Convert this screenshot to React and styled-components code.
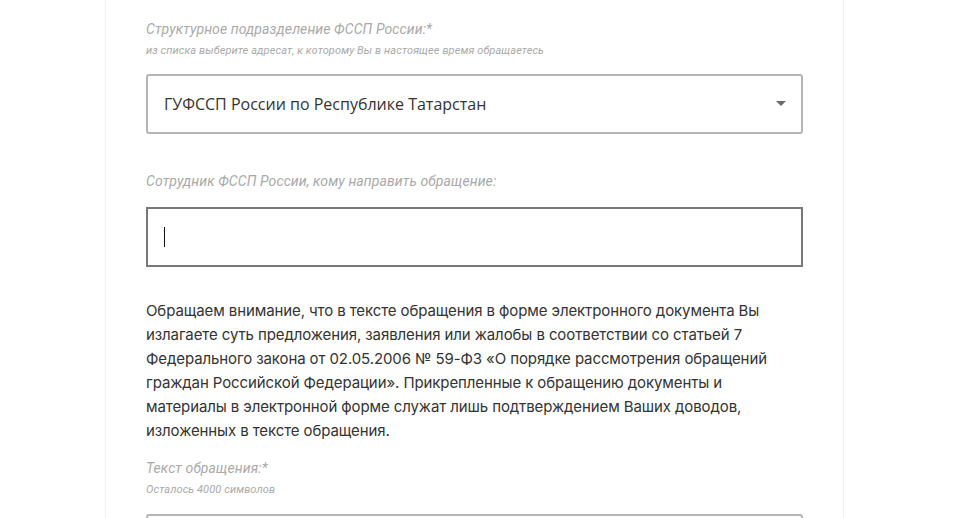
import React from "react";
import styled, { createGlobalStyle } from "styled-components";

const GlobalStyle = createGlobalStyle`
  html, body {
    margin: 0;
    padding: 0;
    background: #ffffff;
    overflow: hidden;
  }
`;

const Page = styled.div`
  width: 970px;
  height: 518px;
  overflow: hidden;
  background: #ffffff;
`;

const Card = styled.section`
  margin-left: 105px;
  width: 739px;
  min-height: 518px;
  border-left: 1px solid #f0f0f0;
  border-right: 1px solid #f0f0f0;
  padding: 21px 40px 0 40px;
  box-sizing: border-box;
`;

const Field = styled.div`
  display: flex;
  flex-direction: column;
  margin-bottom: ${(p) => p.gap || 0}px;
`;

const Label = styled.label`
  font-family: Roboto, "Liberation Sans", sans-serif;
  font-style: italic;
  font-size: 14px;
  letter-spacing: 0.1px;
  line-height: 16px;
  color: #a9a9a9;
`;

const Hint = styled.span`
  font-family: Roboto, "Liberation Sans", sans-serif;
  font-style: italic;
  font-size: 11px;
  letter-spacing: 0.1px;
  line-height: 12px;
  margin-top: 8px;
  color: #a9a9a9;
`;

const SelectBox = styled.div`
  margin-top: ${(p) => p.top}px;
  height: 60px;
  box-sizing: border-box;
  border: 2px solid #b5b5b5;
  border-radius: 3px;
  display: flex;
  align-items: center;
  justify-content: space-between;
  padding: 0 15px 0 16px;
  font-family: "Open Sans", sans-serif;
  font-size: 16px;
  color: #333333;
`;

const Arrow = styled.span`
  width: 0;
  height: 0;
  border-left: 5px solid transparent;
  border-right: 5px solid transparent;
  border-top: 5px solid #6b6b6b;
  margin-bottom: 1px;
`;

const InputBox = styled.div`
  margin-top: ${(p) => p.top}px;
  height: 60px;
  box-sizing: border-box;
  border: 2px solid #787878;
  display: flex;
  align-items: center;
  padding-left: 16px;
`;

const Caret = styled.span`
  width: 1px;
  height: 20px;
  background: #111111;
`;

const Notice = styled.p`
  margin: 0 0 17px 0;
  font-family: Inter, "Noto Sans", sans-serif;
  font-size: 15px;
  letter-spacing: -0.1px;
  line-height: 24px;
  white-space: nowrap;
  color: #333333;
`;

const TextArea = styled.div`
  margin-top: ${(p) => p.top}px;
  height: 60px;
  border: 2px solid #b5b5b5;
  border-radius: 3px;
`;

export default function App() {
  return (
    <Page>
      <GlobalStyle />
      <Card>
        <Field gap={39}>
          <Label>Структурное подразделение ФССП России:*</Label>
          <Hint>из списка выберите адресат, к которому Вы в настоящее время обращаетесь</Hint>
          <SelectBox top={17}>
            <span>ГУФССП России по Республике Татарстан</span>
            <Arrow />
          </SelectBox>
        </Field>
        <Field gap={32}>
          <Label>Сотрудник ФССП России, кому направить обращение:</Label>
          <InputBox top={18}>
            <Caret />
          </InputBox>
        </Field>
        <Notice>
          Обращаем внимание, что в тексте обращения в форме электронного документа Вы
          <br />
          излагаете суть предложения, заявления или жалобы в соответствии со статьей 7
          <br />
          Федерального закона от 02.05.2006 № 59-ФЗ «О порядке рассмотрения обращений
          <br />
          граждан Российской Федерации». Прикрепленные к обращению документы и
          <br />
          материалы в электронной форме служат лишь подтверждением Ваших доводов,
          <br />
          изложенных в тексте обращения.
        </Notice>
        <Field>
          <Label>Текст обращения:*</Label>
          <Hint>Осталось 4000 символов</Hint>
          <TextArea top={18} />
        </Field>
      </Card>
    </Page>
  );
}
